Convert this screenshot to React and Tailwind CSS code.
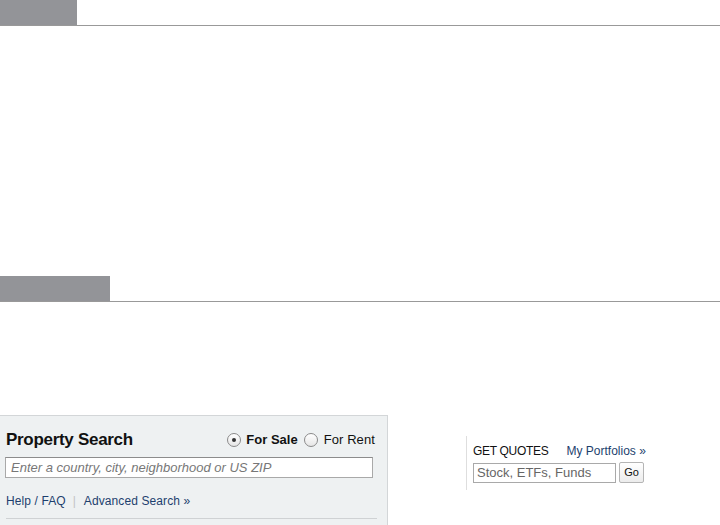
export default function App() {
  const font = { fontFamily: '"Liberation Sans", Arial, sans-serif' };
  return (
    <div className="w-[720px] h-[525px] bg-white overflow-hidden relative" style={font}>
      {/* Section header 1 */}
      <div className="flex items-end h-[26px] border-b border-[#999999]">
        <div className="w-[77px] h-[25px] bg-[#939498]" />
      </div>
      <div className="h-[250px]" />
      {/* Section header 2 */}
      <div className="flex items-end h-[26px] border-b border-[#999999]">
        <div className="w-[110px] h-[25px] bg-[#939498]" />
      </div>
      <div className="h-[113px]" />
      <div className="flex items-start">
        {/* Property search panel */}
        <div className="w-[388px] h-[110px] bg-[#eef1f2] border-t border-r border-[#d3d6d8] pl-[5px] pr-[12px] pt-[14px]">
          <div className="flex items-center justify-between h-[20px]">
            <div className="text-[17px] font-bold text-[#111] pl-[1px] tracking-[-0.3px]">Property Search</div>
            <div className="flex items-center text-[13px] text-[#111]">
              <span className="w-[14px] h-[14px] rounded-full border border-[#8a8a8a] bg-gradient-to-b from-white to-[#e6e6e6] flex items-center justify-center">
                <span className="w-[4px] h-[4px] rounded-full bg-[#333]" />
              </span>
              <span className="ml-[5px] font-bold">For Sale</span>
              <span className="ml-[6px] w-[14px] h-[14px] rounded-full border border-[#8a8a8a] bg-gradient-to-b from-white to-[#e6e6e6]" />
              <span className="ml-[6px] tracking-[0.1px]">For Rent</span>
            </div>
          </div>
          <div className="mt-[7px] w-[368px] h-[21px] bg-white border border-[#a9a9a9] border-t-[#8c8c8c] flex items-center pl-[5px]">
            <span className="text-[13px] italic text-[#777]">Enter a country, city, neighborhood or US ZIP</span>
          </div>
          <div className="mt-[14px] flex items-center text-[12px] pl-[1px]">
            <span className="text-[#1d3f6e] tracking-[0.1px]">Help / FAQ</span>
            <span className="ml-[7px] mr-[8px] text-[#c4c4c4]">|</span>
            <span className="text-[#1d3f6e] tracking-[0.1px]">Advanced Search »</span>
          </div>
          <div className="mt-[8px] ml-[1px] h-px w-[371px] bg-[#cfd2d4]" />
        </div>
        <div className="w-[78px]" />
        {/* Quotes */}
        <div className="mt-[21px] h-[54px] border-l border-[#dedede] pl-[6px] pt-[8px]">
          <div className="flex items-center text-[12px] h-[14px]">
            <span className="text-[#111] tracking-[-0.3px]">GET QUOTES</span>
            <span className="ml-[18px] text-[#1d3f6e]">My Portfolios »</span>
          </div>
          <div className="mt-[4px] flex items-center">
            <div className="w-[143px] h-[20px] border border-[#a9a9a9] flex items-center pl-[3px] text-[13px] text-[#666]">Stock, ETFs, Funds</div>
            <div className="ml-[3px] w-[25px] h-[21px] border border-[#b5b5b5] rounded-[2px] bg-gradient-to-b from-white to-[#ececec] flex items-center justify-center text-[11px] text-[#111]">Go</div>
          </div>
        </div>
      </div>
    </div>
  );
}
